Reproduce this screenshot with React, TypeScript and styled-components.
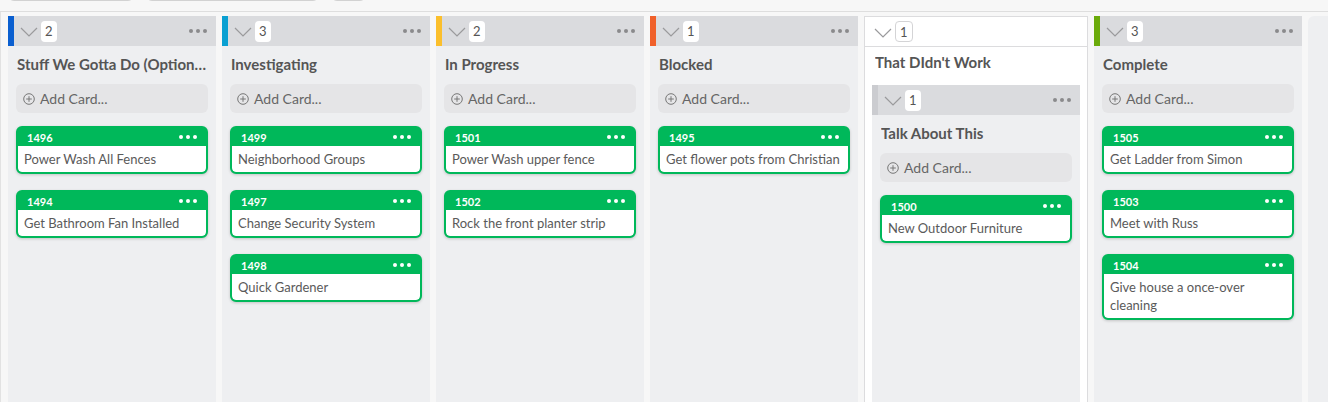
import React from "react";
import styled, { createGlobalStyle } from "styled-components";

const Global = createGlobalStyle`
  html, body { margin: 0; padding: 0; background: #f7f7f7; }
  body { font-family: "Lato", "Open Sans", sans-serif; overflow: hidden; }
  * { box-sizing: border-box; }
`;

const Page = styled.div`
  width: 1328px;
  height: 402px;
  display: flex;
  flex-direction: column;
  overflow: hidden;
  background: #f7f7f7;
`;

const Toolbar = styled.div`
  height: 12px;
  flex: none;
  display: flex;
  align-items: flex-end;
  gap: 12px;
  padding: 0 8px 10px 8px;
  border-bottom: 1px solid #dedede;
  overflow: visible;
`;

const ToolButton = styled.div<{ $w: number }>`
  width: ${(p) => p.$w}px;
  height: 28px;
  flex: none;
  border: 1px solid #d2d2d2;
  border-radius: 6px;
  background: #f9f9f9;
`;

const Board = styled.div`
  flex: 1;
  display: flex;
  gap: 6px;
  padding: 4px 0 0 7px;
  border-left: 1px solid #e2e2e2;
  min-height: 0;
`;

const Column = styled.div`
  width: 208px;
  flex: none;
  display: flex;
  flex-direction: column;
  background: #eeeff1;
`;

const GroupColumn = styled.div`
  width: 224px;
  flex: none;
  display: flex;
  flex-direction: column;
  background: #ffffff;
  border: 1px solid #dcdcde;
  border-bottom: none;
`;

const GroupInner = styled.div`
  flex: 1;
  display: flex;
  flex-direction: column;
  padding: 0 7px 0 7px;
`;

const NestedColumn = styled(Column)`
  flex: 1;
`;

const GhostColumn = styled.div`
  width: 60px;
  flex: none;
  background: #eeeff1;
  border-radius: 6px 0 0 0;
`;

const Header = styled.div<{ $bar: string; $plain?: boolean }>`
  height: 30px;
  flex: none;
  display: flex;
  align-items: center;
  background: ${(p) => (p.$plain ? "#ffffff" : "#dadbde")};
  border-left: ${(p) => (p.$plain ? "0" : `6px solid ${p.$bar}`)};
  border-bottom: ${(p) => (p.$plain ? "1px solid #dcdcde" : "0")};
  padding: ${(p) => (p.$plain ? "0 0 0 9px" : "0 0 0 6px")};
`;

const Chevron = styled.svg`
  width: 18px;
  height: 10px;
  flex: none;
  margin-top: 2px;
`;

const Badge = styled.span<{ $outlined?: boolean }>`
  margin-left: 3px;
  min-width: 14px;
  height: 21px;
  padding: 0 4px;
  border-radius: 4px;
  background: #ffffff;
  border: ${(p) => (p.$outlined ? "1px solid #d4d4d6" : "0")};
  display: flex;
  align-items: center;
  justify-content: center;
  font-size: 13px;
  color: #555;
`;

const Spacer = styled.div`
  flex: 1;
`;

const Dots = styled.span<{ $color: string; $right: number }>`
  display: flex;
  gap: 3px;
  margin-right: ${(p) => p.$right}px;
  & > i {
    width: 4px;
    height: 4px;
    border-radius: 50%;
    background: ${(p) => p.$color};
    display: block;
  }
`;

const Body = styled.div`
  flex: 1;
  display: flex;
  flex-direction: column;
  padding: 8px 8px 0 8px;
`;

const Title = styled.div<{ $gap?: number; $top?: number; $left?: number }>`
  height: 20px;
  line-height: 20px;
  margin: ${(p) => p.$top ?? 0}px 0 ${(p) => p.$gap ?? 10}px ${(p) => p.$left ?? 1}px;
  font-size: 15px;
  font-weight: 700;
  color: #555555;
  white-space: nowrap;
  overflow: hidden;
  text-overflow: ellipsis;
`;

const AddCard = styled.div`
  height: 29px;
  flex: none;
  display: flex;
  align-items: center;
  gap: 5px;
  padding-left: 7px;
  border-radius: 6px;
  background: #e5e5e7;
  font-size: 14px;
  color: #666666;
  margin-bottom: 13px;
`;

const CardList = styled.div`
  display: flex;
  flex-direction: column;
  gap: 16px;
`;

const Card = styled.div`
  border: 2px solid #00b85a;
  border-radius: 6px;
  background: #00b85a;
  box-shadow: 0 1px 3px rgba(0, 0, 0, 0.18);
  overflow: hidden;
`;

const CardHead = styled.div`
  height: 18px;
  display: flex;
  align-items: center;
  padding-left: 9px;
  font-size: 11px;
  font-weight: 700;
  color: #ffffff;
`;

const CardBody = styled.div`
  background: #ffffff;
  border-radius: 0 0 4px 4px;
  padding: 4px 6px 4px 6px;
  font-size: 13px;
  line-height: 18px;
  color: #5a5a5a;
`;

const ChevronIcon = () => (
  <Chevron viewBox="0 0 18 10">
    <path d="M1 1 L9 9 L17 1" fill="none" stroke="#9a9a9c" strokeWidth="1.2" />
  </Chevron>
);

const PlusIcon = () => (
  <svg width="12" height="12" viewBox="0 0 12 12">
    <circle cx="6" cy="6" r="5.3" fill="none" stroke="#777" strokeWidth="1" />
    <path d="M6 3.2 V8.8 M3.2 6 H8.8" stroke="#777" strokeWidth="1" />
  </svg>
);

const DotRow = ({ color, right }: { color: string; right: number }) => (
  <Dots $color={color} $right={right}>
    <i />
    <i />
    <i />
  </Dots>
);

type CardData = { id: string; text: string };
type ColData = { title: string; bar: string; cards: CardData[] };

const CardView = ({ c }: { c: CardData }) => (
  <Card>
    <CardHead>
      {c.id}
      <Spacer />
      <DotRow color="#ffffff" right={9} />
    </CardHead>
    <CardBody>{c.text}</CardBody>
  </Card>
);

const ColumnContent = ({ col }: { col: ColData }) => (
  <>
    <Header $bar={col.bar}>
      <ChevronIcon />
      <Badge>{col.cards.length}</Badge>
      <Spacer />
      <DotRow color="#8a8a8c" right={9} />
    </Header>
    <Body>
      <Title>{col.title}</Title>
      <AddCard>
        <PlusIcon />
        Add Card...
      </AddCard>
      <CardList>
        {col.cards.map((c) => (
          <CardView key={c.id} c={c} />
        ))}
      </CardList>
    </Body>
  </>
);

const columns: ColData[] = [
  {
    title: "Stuff We Gotta Do (Optional)",
    bar: "#0a5fd0",
    cards: [
      { id: "1496", text: "Power Wash All Fences" },
      { id: "1494", text: "Get Bathroom Fan Installed" },
    ],
  },
  {
    title: "Investigating",
    bar: "#0aa0d2",
    cards: [
      { id: "1499", text: "Neighborhood Groups" },
      { id: "1497", text: "Change Security System" },
      { id: "1498", text: "Quick Gardener" },
    ],
  },
  {
    title: "In Progress",
    bar: "#fbbf2c",
    cards: [
      { id: "1501", text: "Power Wash upper fence" },
      { id: "1502", text: "Rock the front planter strip" },
    ],
  },
  {
    title: "Blocked",
    bar: "#f0602a",
    cards: [{ id: "1495", text: "Get flower pots from Christian" }],
  },
];

const nested: ColData = {
  title: "Talk About This",
  bar: "#cbccd0",
  cards: [{ id: "1500", text: "New Outdoor Furniture" }],
};

const complete: ColData = {
  title: "Complete",
  bar: "#6aaa0a",
  cards: [
    { id: "1505", text: "Get Ladder from Simon" },
    { id: "1503", text: "Meet with Russ" },
    { id: "1504", text: "Give house a once-over cleaning" },
  ],
};

export default function App() {
  return (
    <Page>
      <Global />
      <Toolbar>
        <ToolButton $w={126} />
        <ToolButton $w={173} />
        <ToolButton $w={35} />
      </Toolbar>
      <Board>
        {columns.map((col) => (
          <Column key={col.title}>
            <ColumnContent col={col} />
          </Column>
        ))}
        <GroupColumn>
          <Header $bar="#fff" $plain>
            <ChevronIcon />
            <Badge $outlined>1</Badge>
          </Header>
          <GroupInner>
            <Title $gap={13} $top={5} $left={3}>
              That DIdn't Work
            </Title>
            <NestedColumn>
              <ColumnContent col={nested} />
            </NestedColumn>
          </GroupInner>
        </GroupColumn>
        <Column>
          <ColumnContent col={complete} />
        </Column>
        <GhostColumn />
      </Board>
    </Page>
  );
}
